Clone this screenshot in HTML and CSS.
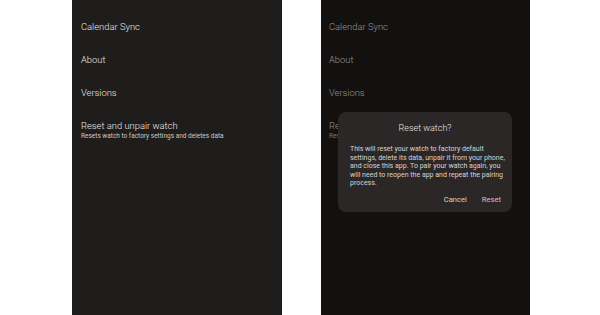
FILE: index.html
```html
<!DOCTYPE html>
<html lang="en">
<head>
    <meta charset="UTF-8">
    <title>Watch Settings</title>
    <link rel="stylesheet" href="styles.css">
</head>
<body>

    <div class="screens">

        <!-- Settings list -->
        <div class="screen">
            <div class="setting">Calendar Sync</div>
            <div class="setting">About</div>
            <div class="setting">Versions</div>
            <div class="setting">
                Reset and unpair watch
                <div class="setting-sub">Resets watch to factory settings and deletes data</div>
            </div>
        </div>

        <!-- Settings list with reset dialog -->
        <div class="screen screen-dim">
            <div class="setting">Calendar Sync</div>
            <div class="setting">About</div>
            <div class="setting">Versions</div>
            <div class="setting">
                Reset and unpair watch
                <div class="setting-sub">Resets watch to factory settings and deletes data</div>
            </div>

            <div class="dialog">
                <div class="dialog-title">Reset watch?</div>
                <p class="dialog-body">This will reset your watch to factory default<br>settings, delete its data, unpair it from your phone,<br>and close this app. To pair your watch again, you<br>will need to reopen the app and repeat the pairing<br>process.</p>
                <div class="dialog-actions">
                    <button class="btn">Cancel</button>
                    <button class="btn btn-danger">Reset</button>
                </div>
            </div>
        </div>

    </div>

</body>
</html>
```

FILE: styles.css
```css
/* Basic Reset */
* {
    margin: 0;
    padding: 0;
    box-sizing: border-box;
}

body {
    font-family: 'Roboto', 'Liberation Sans', sans-serif;
    font-weight: 400;
    background-color: #fff;
    width: 600px;
    height: 315px;
    overflow: hidden;
}

.screens {
    display: flex;
    gap: 39px;
    padding-left: 72px;
    height: 315px;
}

/* Phone screen */
.screen {
    position: relative;
    width: 210px;
    height: 315px;
    background-color: #1f1c1c;
    padding-top: 20px;
    padding-left: 9px;
}

.screen-dim {
    width: 209px;
    background-color: #131110;
    padding-left: 8px;
}

.setting {
    font-size: 9.4px;
    font-weight: 300;
    color: #ece7e7;
    height: 33px;
    line-height: 13px;
}

.setting-sub {
    font-size: 6.5px;
    font-weight: 400;
    line-height: 9px;
    color: #cdc7c7;
}

.screen-dim .setting {
    color: #9a9594;
}

.screen-dim .setting-sub {
    color: #7d7877;
}

/* Dialog */
.dialog {
    position: absolute;
    left: 17px;
    top: 112px;
    width: 174px;
    height: 100px;
    background-color: #2a2726;
    border-radius: 8px;
    padding: 10px 2px 0 12px;
}

.dialog-title {
    text-align: center;
    font-size: 9px;
    font-weight: 300;
    color: #ebe6e6;
    line-height: 12px;
    padding-right: 10px;
}

.dialog-body {
    margin-top: 11px;
    font-size: 7px;
    line-height: 8.6px;
    color: #d8d3d2;
    white-space: nowrap;
}

.dialog-actions {
    display: flex;
    justify-content: flex-end;
    gap: 15px;
    margin-top: 7px;
    padding-right: 9px;
}

.btn {
    font-family: 'Roboto', 'Liberation Sans', sans-serif;
    font-size: 7.6px;
    font-weight: 400;
    background: none;
    border: none;
    color: #d6d0d0;
}

.btn-danger {
    color: #e9b3c2;
}
```
